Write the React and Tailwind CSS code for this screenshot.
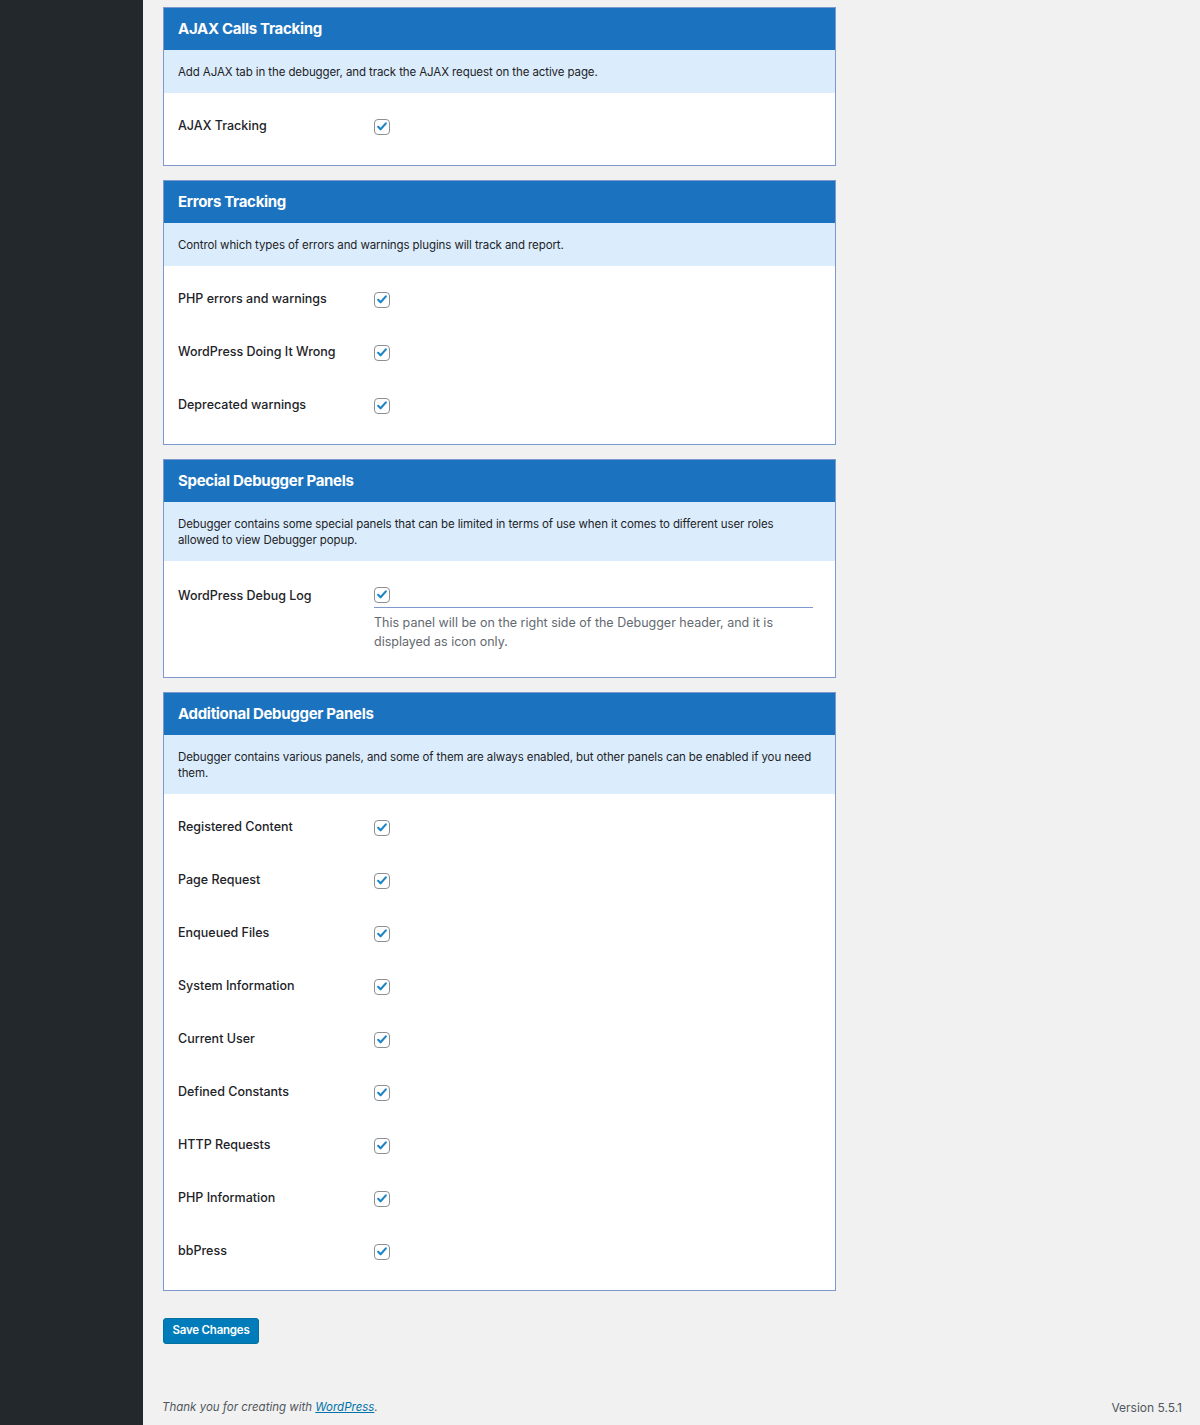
import React from 'react';

const font = { fontFamily: 'Inter, "Noto Sans", "Liberation Sans", sans-serif' };

function Check() {
  return (
    <span className="inline-flex h-4 w-4 items-center justify-center rounded-[4px] border border-[#8c8f94] bg-white">
      <svg viewBox="0 0 20 20" className="h-[15px] w-[15px]" fill="none">
        <path d="M4.5 10.5l3.5 3.5 7.5-8.5" stroke="#1d84c6" strokeWidth="3" strokeLinecap="round" strokeLinejoin="round" />
      </svg>
    </span>
  );
}

function Row({ label }) {
  return (
    <div className="flex h-[53px] items-center">
      <div className="w-[196px] text-[12.5px] font-medium text-[#1d2327]">{label}</div>
      <Check />
    </div>
  );
}

function Panel({ title, desc, children }) {
  return (
    <div className="w-[673px] border border-[#7c98cc] bg-white">
      <div className="flex h-[42px] items-center bg-[#1b72be] px-[14px] text-[15px] font-bold tracking-[-0.3px] text-white">
        {title}
      </div>
      <div className="bg-[#dbedfc] pt-[14px] pb-[13px] pl-[14px] pr-[20px] text-[11.5px] leading-[16px] tracking-[-0.1px] text-[#1d2327]">
        {desc}
      </div>
      <div className="px-[14px] pt-[7px] pb-[12px]">{children}</div>
    </div>
  );
}

export default function App() {
  return (
    <div className="flex min-h-[1425px] bg-[#f1f1f1]" style={font}>
      <div className="w-[143px] shrink-0 bg-[#23282d]" />
      <div className="flex flex-1 flex-col pl-[20px] pr-[18px]">
        <div className="flex flex-col gap-[14px] pt-[7px]">
          <Panel title="AJAX Calls Tracking" desc="Add AJAX tab in the debugger, and track the AJAX request on the active page.">
            <Row label="AJAX Tracking" />
          </Panel>
          <Panel title="Errors Tracking" desc="Control which types of errors and warnings plugins will track and report.">
            <Row label="PHP errors and warnings" />
            <Row label="WordPress Doing It Wrong" />
            <Row label="Deprecated warnings" />
          </Panel>
          <Panel
            title="Special Debugger Panels"
            desc="Debugger contains some special panels that can be limited in terms of use when it comes to different user roles allowed to view Debugger popup."
          >
            <div className="flex pt-[16px] pb-[14px]">
              <div className="mt-[4px] w-[196px] text-[12.5px] font-medium leading-[16px] text-[#1d2327]">
                WordPress Debug Log
              </div>
              <div className="flex-1 pr-[8px]">
                <div className="h-[24px] border-b border-[#7c98cc]">
                  <Check />
                </div>
                <p className="mt-[5px] text-[12.5px] leading-[19px] text-[#646970]">
                  This panel will be on the right side of the Debugger header, and it is displayed as icon only.
                </p>
              </div>
            </div>
          </Panel>
          <Panel
            title="Additional Debugger Panels"
            desc="Debugger contains various panels, and some of them are always enabled, but other panels can be enabled if you need them."
          >
            {[
              'Registered Content',
              'Page Request',
              'Enqueued Files',
              'System Information',
              'Current User',
              'Defined Constants',
              'HTTP Requests',
              'PHP Information',
              'bbPress',
            ].map((l) => (
              <Row key={l} label={l} />
            ))}
          </Panel>
        </div>
        <div className="pt-[25px]">
          <button className="h-[26px] w-[96px] rounded-[3px] border border-[#0071a1] bg-[#007cba] text-[11.5px] font-semibold tracking-[-0.2px] text-white">
            Save Changes
          </button>
        </div>
        <div className="mt-auto -ml-[1px] flex items-center justify-between pb-[8px] text-[12px] text-[#50575e]">
          <span className="text-[11.5px] italic">
            Thank you for creating with <a className="text-[#0073aa] underline">WordPress</a>.
          </span>
          <span>Version 5.5.1</span>
        </div>
      </div>
    </div>
  );
}
